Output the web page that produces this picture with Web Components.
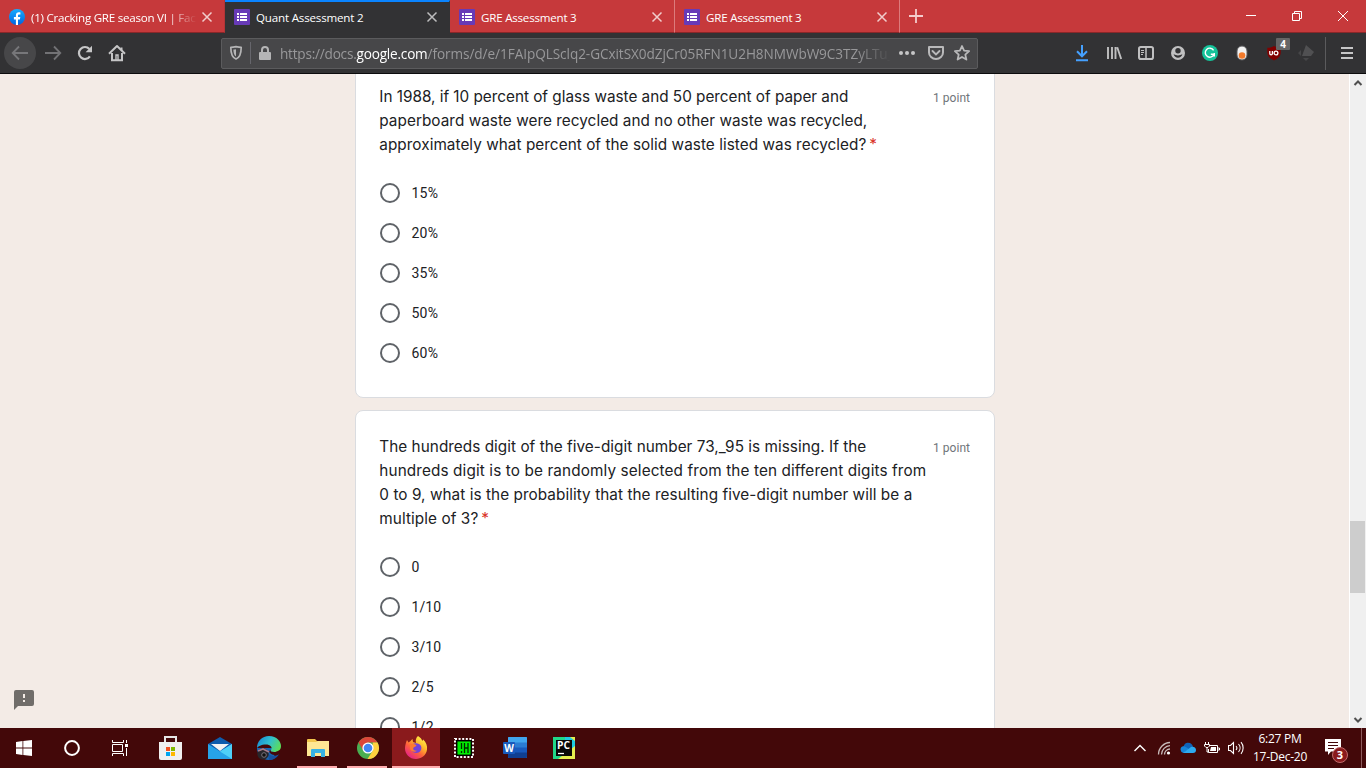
<!DOCTYPE html>
<html lang="en">
<head>
<meta charset="utf-8">
<title>Quant Assessment 2</title>
<style>
html,body{margin:0;height:100%;overflow:hidden}
body{font-family:"Open Sans","Noto Sans",sans-serif}
</style>
</head>
<body>
<app-desktop></app-desktop>
<script>
const I = (w,h,body,extra='') => `<svg width="${w}" height="${h}" viewBox="0 0 ${w} ${h}" fill="none" ${extra}>${body}</svg>`;
const icons = {
facebook: I(16,16,`<defs><linearGradient id="g" x1="0" y1="0" x2="0" y2="1"><stop stop-color="#18acfe"/><stop offset="1" stop-color="#0163e0"/></linearGradient></defs><circle cx="8" cy="8" r="8" fill="url(#g)"/><path d="M6.900 16v-5.600H4.900V8.100h2V6.500c0-2.200 1.100-3.200 2.900-3.200.8 0 1.400.1 1.600.1v2h-1.100c-1 0-1.300.5-1.300 1.200v1.500h2.300l-.4 2.300H9V16z" fill="#fff"/>`),
forms: I(16,16,`<rect width="16" height="16" rx="1" fill="#673ab7"/><path d="M3 4h2v2H3zM3 7h2v2H3zM3 10h2v2H3zM6 4h7v2H6zM6 7h7v2H6zM6 10h7v2H6z" fill="#fff"/>`),
close: I(12,12,`<path d="M1.500 1.500l9 9M10.500 1.500l-9 9" stroke="currentColor" stroke-width="1.500"/>`),
plus: I(16,16,`<path d="M8 1v14M1 8h14" stroke="#f4cccc" stroke-width="1.800"/>`),
min: I(12,12,`<path d="M1 5.500h10" stroke="#fff"/>`),
restore: I(12,12,`<path d="M1.500 3.500h7v7h-7zM3.500 3.500v-2h7v7h-2" stroke="#fff"/>`),
winclose: I(12,12,`<path d="M1 1l10 10M11 1L1 11" stroke="#fff"/>`),
back: I(18,18,`<path d="M17 9H2M8 2.500L1.700 9 8 15.500" stroke="#77777a" stroke-width="1.800"/>`),
forward: I(18,18,`<path d="M1 9h15M10 2.500L16.300 9 10 15.500" stroke="#727275" stroke-width="1.800"/>`),
reload: I(18,18,`<path d="M13.900 12.400A6 6 0 1 1 13.400 5" stroke="#c6c6c7" stroke-width="2.200"/><path d="M16 1.800v6.400H9.600z" fill="#c6c6c7"/>`),
home: I(18,18,`<path d="M1 9.700L9 2l8 7.700" stroke="#c6c6c7" stroke-width="2" stroke-linejoin="round"/><path d="M4 9v7.200h10V9" stroke="#c6c6c7" stroke-width="2"/><path d="M8 16v-5h2v5" stroke="#c6c6c7" stroke-width="1.400"/><path d="M12.500 3.400h2V7l-2-2z" fill="#c6c6c7"/>`),
shield: I(14,16,`<path d="M7 1.600C5.200 2 3.300 2.300 1.800 2.300c0 4.800.4 10 5.200 11.700 4.800-1.700 5.200-6.900 5.200-11.700C10.700 2.300 8.800 2 7 1.600z" stroke="#b5b5b6" stroke-width="1.700" stroke-linejoin="round"/><path d="M7 4.200C6.100 4.500 5.300 4.600 4.400 4.600 4.500 7.500 4.800 10.200 7 11.500z" fill="#b5b5b6"/>`),
lock: I(14,16,`<path d="M4 8V5a3 3 0 0 1 6 0v3" stroke="#b5b5b6" stroke-width="2"/><rect x="1" y="7" width="12" height="8" rx="1" fill="#b5b5b6"/>`),
dots: I(16,16,`<g fill="#c6c6c7"><circle cx="2" cy="8" r="2"/><circle cx="8" cy="8" r="2"/><circle cx="14" cy="8" r="2"/></g>`),
pocket: I(18,16,`<path d="M2 2h14v5.500a7 6.500 0 0 1-14 0z" stroke="#b9b9ba" stroke-width="2" stroke-linejoin="round"/><path d="M5.500 6l3.500 3.400L12.500 6" stroke="#b9b9ba" stroke-width="1.900" stroke-linecap="round"/>`),
star: I(18,18,`<path d="M9 2l2.100 4.700 5 .5-3.800 3.400 1.100 5L9 13l-4.400 2.600 1.100-5L1.900 7.200l5-.5z" stroke="#b9b9ba" stroke-width="1.800" stroke-linejoin="round"/>`),
download: I(16,18,`<path d="M8 1v11M3 7.300l5 5 5-5M2 16.300h12" stroke="#45a1ff" stroke-width="2"/>`),
library: I(16,16,`<path d="M2 2v12M6 2v12M9.500 2v12M11.200 2.300l4 11.700" stroke="#c0c0c1" stroke-width="1.900"/>`),
sidebar: I(16,16,`<rect x="1" y="2" width="14" height="12" rx="1.800" stroke="#c0c0c1" stroke-width="2"/><path d="M8 2v12" stroke="#c0c0c1" stroke-width="1.500"/><path d="M3 5.500h3M3 7.500h3M3 9.500h2" stroke="#c0c0c1"/>`),
account: I(16,16,`<circle cx="8" cy="8" r="7" fill="#c0c0c1"/><circle cx="8" cy="5.800" r="2.700" fill="#323234"/><path d="M3.600 9.300c2.600 1.500 6.200 1.500 8.800 0-.7 2.300-2.300 3.400-4.400 3.400S4.300 11.600 3.600 9.300z" fill="#323234"/>`),
grammarly: I(16,16,`<circle cx="8" cy="8" r="8" fill="#15c39a"/><path d="M11.600 5.300A4.500 4.500 0 1 0 12 9.200H8.800M12.300 8v3.500" stroke="#fff" stroke-width="1.400"/>`),
pill: I(12,16,`<rect x="1" y="1" width="10" height="14" rx="5" fill="#f2f2f2" stroke="#5a5a5d"/><circle cx="6" cy="10.500" r="3.300" fill="#f47b2c"/>`),
ublock: I(16,16,`<path d="M8 1C5.800 2.200 3.500 2.700 1.300 2.800v5c0 3.800 3.400 6.200 6.700 7.700 3.300-1.500 6.700-3.900 6.700-7.700v-5C12.500 2.700 10.200 2.200 8 1z" fill="#800000"/><path d="M3.800 6v2.500a1.300 1.300 0 0 0 2.600 0V6" stroke="#fff" stroke-width="1.300"/><circle cx="10" cy="8" r="1.900" stroke="#fff" stroke-width="1.300"/>`),
ghost: I(18,18,`<path d="M9 1l8 7-3 4H5z" fill="#505052"/><path d="M4 6v6L1 9zM6 14h6l-3 3z" fill="#464648"/>`),
menu: I(14,14,`<path d="M1 2h12M1 7h12M1 12h12" stroke="#c6c6c7" stroke-width="2"/>`),
up: I(10,8,`<path d="M1.500 6L5 2.500 8.500 6" stroke="#505050" stroke-width="2"/>`),
down: I(10,8,`<path d="M1.500 2L5 5.500 8.500 2" stroke="#505050" stroke-width="2"/>`),
feedback: I(20,20,`<path d="M2 0h16a2 2 0 0 1 2 2v12a2 2 0 0 1-2 2H4l-4 4V2a2 2 0 0 1 2-2z" fill="#706d6a"/><path d="M9 4h2v4H9zM9 10h2v2H9z" fill="#f3ebe6"/>`),
windows: I(16,16,`<path d="M0 2l6.500-.9V7.500H0zM7.300 1L16 0v7.500H7.300zM0 8.400h6.500v6.500L0 14zM7.300 8.400H16V16l-8.700-1.100z" fill="#fff"/>`),
cortana: I(18,18,`<circle cx="9" cy="9" r="6.900" stroke="#fff" stroke-width="2"/>`),
taskview: I(18,18,`<path d="M1.500 1v2.500h11V1M1.500 17v-2.500h11V17M1.500 5.500h10v7h-10zM15.500 1v3M15.500 9v8" stroke="#fff"/><path d="M14 5h3v3h-3z" fill="#fff"/>`),
store: I(24,24,`<path d="M6 7V1h11v6" stroke="#e6e6e6" stroke-width="2"/><path d="M0 6h23v16a2 2 0 0 1-2 2H2a2 2 0 0 1-2-2z" fill="#f0f0f0"/><path d="M7 11h4v4H7z" fill="#f25022"/><path d="M12 11h4v4h-4z" fill="#7fba00"/><path d="M7 16h4v4H7z" fill="#00a4ef"/><path d="M12 16h4v4h-4z" fill="#ffb900"/>`),
mail: I(24,24,`<path d="M0 8l12-7 12 7v8H0z" fill="#0f5cad"/><path d="M0 8l12 7.500L24 8v15H0z" fill="#27a3e8"/><path d="M24 8v15L12 15.500z" fill="#4fd0f7"/><path d="M3 8h18l-9 7z" fill="#f3f3f3"/>`),
edge: I(24,24,`<defs><linearGradient id="g" x1="0" y1=".2" x2="1" y2=".6"><stop stop-color="#168bd5"/><stop offset=".5" stop-color="#31bfcf"/><stop offset="1" stop-color="#5cdd59"/></linearGradient></defs><path d="M0 12h15l3 10c-2 1.500-4 2-6 2C5 24 0 19 0 12z" fill="#1666b4"/><path d="M0 12C0 5 5 0 12 0c8 0 12 6 12 10 0 4-3 6-7 6-3 0-4-1-3-2 2-3-1-5.500-5-5.500-5 0-8 2-9 3.500z" fill="url(#g)"/><path d="M10 14c0 4 4 7.500 10.500 5L22 18c-2 4-6 6-10 6z" fill="#164f9c"/><path d="M14 14c-1 1 0 2 3 2 2 0 4-.5 5.500-2L22 18c-4 2-9 1-10-3z" fill="#430809"/><circle cx="6" cy="18" r="5.700" fill="#27262b"/><path d="M1 15l5-2 6 3" stroke="#a77b8b" stroke-width="1.700"/><circle cx="7" cy="19" r="2.300" fill="#111" stroke="#77737c"/>`),
explorer: I(22,20,`<path d="M0 2a1 1 0 0 1 1-1h7l2 2h10a1 1 0 0 1 1 1v4H0z" fill="#f3c64d"/><path d="M0 4h9l2-1h11v15H0z" fill="#ffe794"/><path d="M4 19v-7a1 1 0 0 1 1-1h12a1 1 0 0 1 1 1v7h-4v-4H8v4z" fill="#38b1e3"/>`),
chrome: I(24,24,`<circle cx="12" cy="12" r="11" fill="#4aae51"/><path d="M2.500 6.500A11 11 0 0 1 21.500 6.500H12L7.200 14.800z" fill="#dc4639"/><path d="M21.500 6.500A11 11 0 0 1 11.500 23l5.200-8.200V6.500z" fill="#ffd13e"/><circle cx="12" cy="12" r="5.600" fill="#fff"/><circle cx="12" cy="12" r="4.300" fill="#4285f4"/>`),
firefox: I(24,24,`<defs><linearGradient id="g" x1=".85" y1=".1" x2=".25" y2=".9"><stop stop-color="#fff04a"/><stop offset=".35" stop-color="#ffb52b"/><stop offset=".65" stop-color="#ff623a"/><stop offset="1" stop-color="#e92b7e"/></linearGradient></defs><path d="M14 0c2.500 1.500 3.700 3 4.200 5l1-1.500c3 3 4.300 6 3.800 10C22.300 19.500 17 23 12 23 5.500 23 .8 18 1 12 1.200 9 1.800 7 3 4l1.500 2.500C6 5.500 7 4.500 8.500 3L9 6l3 1c-.8-3 .2-5.500 2-7z" fill="url(#g)"/><path d="M7.500 8.500C10 7 15 6 17 10c1.300 3.500-1 7-4.700 7S7 14 7.500 11z" fill="#7443d8"/><path d="M6 8.500c2-.8 5-.6 6.500 1-.5 1.500-2.500 1.200-3.200 2.500-.6 1.500 1 3 3.700 2.700-2 2-6 1-7-2.200z" fill="#ff7a30"/>`),
chip: I(20,20,`<rect x="1" y="1" width="18" height="18" stroke="#fff" stroke-width="2" stroke-dasharray="2 1.600"/><rect x="2.700" y="2.700" width="14.600" height="14.600" fill="#00ee00" stroke="#000" stroke-width="1.500"/><path d="M7.500 5v6M7.500 13v2M10.500 5v10M14 5v10M10.500 10H14" stroke="#002800" stroke-width="1.300"/>`),
word: I(24,22,`<rect x="5" width="19" height="21" rx="1" fill="#2b7cd3"/><path d="M5 1a1 1 0 0 1 1-1h17a1 1 0 0 1 1 1v4.500H5z" fill="#41a5ee"/><path d="M5 10.500h19V16H5z" fill="#185abd"/><path d="M5 15.500h19V20a1 1 0 0 1-1 1H6a1 1 0 0 1-1-1z" fill="#103f91"/><rect y="5" width="12" height="12" rx="1" fill="#185abd"/><text x="6" y="14.700" text-anchor="middle" font-family="Open Sans" font-weight="700" font-size="10" fill="#fff">W</text>`),
pycharm: I(22,22,`<path d="M0 0h13l9 3v10l-4 9H0z" fill="#21d789"/><path d="M12 0h10v13L12 6z" fill="#1ecbe1"/><path d="M17 0h5v4z" fill="#e5ed4e"/><path d="M22 9v13H5z" fill="#e5ed4e"/><rect x="3" y="3" width="16" height="16" fill="#080808"/><text x="4" y="12" font-family="Open Sans" font-weight="700" font-size="10" textLength="13" lengthAdjust="spacingAndGlyphs" fill="#fff">PC</text><path d="M5 16.500h6" stroke="#fff" stroke-width="1.300"/>`),
chevron: I(14,8,`<path d="M1.500 7L7 1.500 12.500 7" stroke="#fff" stroke-width="1.400"/>`),
wifi: I(14,14,`<path d="M1.500 13.500C1.500 7 7 1.500 13 1.500M4.500 13.500C4.500 9 8.500 4.700 13 4.700M7.500 13.500C7.500 10.500 10 8 13 8" stroke="#c9bbbb" stroke-width="1.300"/><circle cx="11.500" cy="12" r="1.600" fill="#fff"/>`),
onedrive: I(16,12,`<path d="M3 6C4 2 6 .8 8 .8c3 0 4.500 2 5 4L10 8z" fill="#0f64ba"/><path d="M3.500 11A3.500 3.500 0 0 1 3 4.200c2-.2 4 1.300 6 3z" fill="#1684d8"/><path d="M3 11l8-6c3-1 5 1 5 3 0 2-1 3-3 3z" fill="#2daaf0"/>`),
battery: I(16,14,`<path d="M6 4.500h7.500v7h-9V8M14 7h1.500v2H14" stroke="#fff"/><path d="M7 6h5v4H6z" fill="#fff"/><path d="M1.500 1v2M4.500 1v2M.5 3.500h5v1.500L4 6.500H2L.5 5zM3 6.500V11h1.500" stroke="#fff"/>`),
volume: I(17,14,`<path d="M.5 4.500h2l3-3v11l-3-3h-2zM8 5a3 3 0 0 1 0 4M10.500 3a6 6 0 0 1 0 8M13 1.200a9 9 0 0 1 0 11.600" stroke="#fff" stroke-width="1.100"/>`),
action: I(16,16,`<path d="M0 0h16v12.500H6L3 16v-3.500H0z" fill="#fff"/><path d="M3 3.500h10M3 6.500h10M3 9.500h6" stroke="#430809" stroke-width="1.200"/>`)
};
function define(name, css, html, setup){
  const t=document.createElement('template');
  customElements.define(name, class extends HTMLElement{
    connectedCallback(){
      if(this.shadowRoot) return;
      const r=this.attachShadow({mode:'open'});
      t.innerHTML=`<style>${css}</style>${typeof html==='function'?html(this):html}`;
      r.append(t.content.cloneNode(true));
      if(setup) setup(this,r);
    }
  });
}
const a=(e,n,d='')=>e.getAttribute(n)??d;

define('ui-icon',':host{display:inline-flex;flex:none;align-items:center;justify-content:center}svg{display:block}',e=>icons[a(e,'name')]);

/* One line of text, tracked so that it fills the given measure. */
define('fit-text',':host{display:inline-block;white-space:pre;vertical-align:top}span{display:inline-block}',e=>`<span>${a(e,'text')}</span>`,(e,r)=>{
  const s=r.querySelector('span'), want=+a(e,'w'), n=a(e,'text').length;
  s.style.letterSpacing=((want-s.getBoundingClientRect().width)/n)+'px';
});

define('browser-tab',`
:host{display:flex;box-sizing:border-box;width:225px;height:33px;align-items:center;padding:2px 11px 0 9px;color:#f1cccc;font-size:11.6px;border-right:1px solid #dc7b7c;border-bottom:1px solid #892729}
:host([active]){background:#323234;border-color:#323234;border-top:2px solid #0a84ff;padding-top:0;color:#bdbdbe}
:host([first]){border-right-color:#b23537}
.t{flex:1;overflow:hidden;margin:0 5px 0 6px;height:20px;line-height:20px;padding-top:1px;color:#fff}
:host([first]) .t{-webkit-mask-image:linear-gradient(90deg,#000 135px,transparent 166px)}`,e=>`<ui-icon name="${a(e,'icon')}"></ui-icon><div class="t"><fit-text text="${a(e,'label')}" w="${a(e,'w')}"></fit-text></div><ui-icon name="close"></ui-icon>`);

define('tab-strip',`
:host{display:flex;height:33px;background:#c6393b;align-items:stretch}
.n{width:32px;display:flex;align-items:center;justify-content:center;border-bottom:1px solid #892729}
.s{flex:1;border-bottom:1px solid #892729}
.w{width:46px;display:flex;align-items:center;justify-content:center;border-bottom:1px solid #892729}`,`
<browser-tab first icon="facebook" label="(1) Cracking GRE season VI | Facebook" w="197"></browser-tab>
<browser-tab active icon="forms" label="Quant Assessment 2" w="107.500"></browser-tab>
<browser-tab icon="forms" label="GRE Assessment 3" w="95.500"></browser-tab>
<browser-tab icon="forms" label="GRE Assessment 3" w="95.500"></browser-tab>
<div class="n"><ui-icon name="plus"></ui-icon></div><div class="s"></div>
<div class="w"><ui-icon name="min"></ui-icon></div><div class="w"><ui-icon name="restore"></ui-icon></div><div class="w"><ui-icon name="winclose"></ui-icon></div>`);

define('url-bar',`
:host{display:flex;box-sizing:border-box;width:757px;height:31px;border:1px solid #5b5b5d;border-radius:2px;background:#474749;align-items:center;font-size:13.6px;color:#98989a}
.sh{width:28px}.sep{width:1px;height:22px;background:#66666c}.lk{width:28px}
.u{width:610px;height:22px;line-height:22px;padding-top:1px;margin-left:1px;overflow:hidden;white-space:nowrap;display:flex;-webkit-mask-image:linear-gradient(90deg,#000 575px,transparent 611px)}
.h{color:#fff}.d{width:33px}.p{width:25px}.st{width:28px}`,`
<ui-icon class="sh" name="shield"></ui-icon><div class="sep"></div><ui-icon class="lk" name="lock"></ui-icon>
<div class="u"><fit-text text="https://docs." w="76.500"></fit-text><fit-text class="h" text="google.com" w="71"></fit-text><fit-text text="/forms/d/e/1FAIpQLSclq2-GCxitSX0dZjCr05RFN1U2H8NMWbW9C3TZyLTu_" w="466"></fit-text></div>
<ui-icon class="d" name="dots"></ui-icon><ui-icon class="p" name="pocket"></ui-icon><ui-icon class="st" name="star"></ui-icon>`);

define('nav-bar',`
:host{display:flex;box-sizing:border-box;height:41px;background:#323234;border-bottom:1px solid #0c0c0d;align-items:center;padding-left:4px}
.b{width:32px;height:32px;border-radius:50%;background:#474749}
.f{width:34px}.r{width:30px}.h{width:34px}url-bar{margin-left:87px}
.x{display:flex;margin-left:88px}.x>*{width:32px;height:32px}
.ub{position:relative;display:flex;justify-content:center}
.bd{position:absolute;left:18px;top:1px;width:14px;height:12px;background:#666;color:#fff;font:700 10px/12px "Open Sans",sans-serif;text-align:center;border-radius:1px}
.sep{width:1px;height:33px;background:#5b5b5d;margin-left:3px}.m{margin-left:14px}`,`
<ui-icon class="b" name="back"></ui-icon><ui-icon class="f" name="forward"></ui-icon><ui-icon class="r" name="reload"></ui-icon><ui-icon class="h" name="home"></ui-icon>
<url-bar></url-bar>
<div class="x"><ui-icon name="download"></ui-icon><ui-icon name="library"></ui-icon><ui-icon name="sidebar"></ui-icon><ui-icon name="account"></ui-icon><ui-icon name="grammarly"></ui-icon><ui-icon name="pill"></ui-icon><div class="ub"><ui-icon name="ublock"></ui-icon><span class="bd">4</span></div><ui-icon name="ghost"></ui-icon></div>
<div class="sep"></div><ui-icon class="m" name="menu"></ui-icon>`);

define('radio-option',`
:host{display:flex;height:40px;align-items:center;gap:11.4px;font:14px/20px Roboto,sans-serif;color:#202124}
i{box-sizing:border-box;width:20px;height:20px;border:2px solid #5f6368;border-radius:50%}`,e=>`<i></i><fit-text text="${a(e,'label')}" w="${a(e,'w')}"></fit-text>`);

define('question-card',`
:host{display:block;box-sizing:border-box;width:640px;background:#fff;border:1px solid #dadce0;border-radius:8px;padding:24px 24px}
.top{display:flex;justify-content:space-between}
.q{font:15.3px/24px Inter,sans-serif;color:#202124;margin-left:-.7px}
.q div{height:24px;white-space:nowrap}
.req{color:#d93025;margin-left:3px}
.pt{font:12px/24px Roboto,sans-serif;color:#70757a;padding-top:1px}
.o{padding-top:16px}`,e=>{
  const L=JSON.parse(a(e,'lines')), O=JSON.parse(a(e,'options'));
  return `<div class="top"><div class="q">${L.map(([t,w],i)=>`<div><fit-text text="${t}" w="${w}"></fit-text>${i===L.length-1?'<span class="req">*</span>':''}</div>`).join('')}</div><div class="pt"><fit-text text="1 point" w="37"></fit-text></div></div>
<div class="o">${O.map(([t,w])=>`<radio-option label="${t}" w="${w}"></radio-option>`).join('')}</div>`});

define('scroll-bar',`
:host{display:flex;flex-direction:column;align-items:center;box-sizing:border-box;width:17px;background:#f0f0f0;border-left:1px solid #fff}
ui-icon{height:17px;margin-right:1px}.g{flex:430}.h{flex:118}.t{height:72px;width:15px;margin-right:1px;background:#cdcdcd}`,`<ui-icon name="up"></ui-icon><div class="g"></div><div class="t"></div><div class="h"></div><ui-icon name="down"></ui-icon>`);

define('form-page',`
:host{display:flex;flex:1;min-height:0;overflow:hidden;background:#f3ebe6}
.side{width:355px;display:flex;align-items:flex-end}.side ui-icon{margin:0 0 18px 14px}
main{width:640px;display:flex;flex-direction:column;gap:12px;margin-top:-14px}
main>*{flex:none}.r{flex:1}`,`
<div class="side"><ui-icon name="feedback"></ui-icon></div>
<main>
<question-card lines='[["In 1988, if 10 percent of glass waste and 50 percent of paper and",469],["paperboard waste were recycled and no other waste was recycled,",488],["approximately what percent of the solid waste listed was recycled?",487]]' options='[["15%",27],["20%",27],["35%",27],["50%",27],["60%",27]]'></question-card>
<question-card lines='[["The hundreds digit of the five-digit number 73,_95 is missing. If the",487],["hundreds digit is to be randomly selected from the ten different digits from",547],["0 to 9, what is the probability that the resulting five-digit number will be a",533],["multiple of 3?",99]]' options='[["0",8.200],["1/10",30],["3/10",30],["2/5",22.500],["1/2",22.500]]'></question-card>
</main><div class="r"></div><scroll-bar></scroll-bar>`);

define('task-button',`
:host{display:flex;flex:none;box-sizing:border-box;width:49px;height:40px;align-items:center;justify-content:center;position:relative}
:host([small]){width:48px}
:host([active]){background:#8a1a1c;width:48px}
b{position:absolute;left:4px;right:5px;bottom:0;height:2px;background:#ffacae;display:none}
:host([open]) b{display:block}:host([active]) b{left:0;right:0}`,e=>`<ui-icon name="${a(e,'icon')}"></ui-icon><b></b>`);

define('task-bar',`
:host{display:flex;height:40px;background:#430809;color:#fff;font-size:12px;align-items:center}
.gap{width:2px}.one{width:1px}.two{width:2px}.sp{flex:1}
.tray{display:flex;align-items:center}
.tray ui-icon{width:24px}
.clock{width:64px;text-align:center;line-height:18px;height:36px;display:flex;flex-direction:column;align-items:center}
.ac{position:relative;width:49px;height:40px;display:flex;align-items:center;justify-content:center}
.ac ui-icon{width:16px;margin-right:8px;margin-bottom:2px}
.bd{position:absolute;left:20px;top:19px;width:14px;height:14px;border-radius:50%;background:#8a1a1c;border:1px solid #c06b6c;font:700 11px/14px "Open Sans",sans-serif;text-align:center}
.e{width:4px;height:40px;border-left:1px solid #8c5a5b}`,`
<task-button small icon="windows"></task-button><task-button small icon="cortana"></task-button><task-button small icon="taskview"></task-button><div class="gap"></div>
<task-button icon="store"></task-button><task-button icon="mail"></task-button><task-button icon="edge"></task-button><task-button open icon="explorer"></task-button><div class="one"></div><task-button open icon="chrome"></task-button><task-button open active icon="firefox"></task-button><task-button small icon="chip"></task-button><div class="two"></div><task-button icon="word"></task-button><task-button icon="pycharm"></task-button>
<div class="sp"></div>
<div class="tray"><ui-icon name="chevron"></ui-icon><ui-icon name="wifi"></ui-icon><ui-icon name="onedrive"></ui-icon><ui-icon name="battery"></ui-icon><ui-icon name="volume"></ui-icon></div>
<div class="clock"><fit-text text="6:27 PM" w="43"></fit-text><fit-text text="17-Dec-20" w="54"></fit-text></div>
<div class="ac"><ui-icon name="action"></ui-icon><span class="bd">3</span></div><div class="e"></div>`);

define('app-desktop',`:host{display:flex;flex-direction:column;width:1366px;height:768px;overflow:hidden}tab-strip,nav-bar,task-bar{flex:none}`,`<tab-strip></tab-strip><nav-bar></nav-bar><form-page></form-page><task-bar></task-bar>`);
</script>
</body>
</html>
